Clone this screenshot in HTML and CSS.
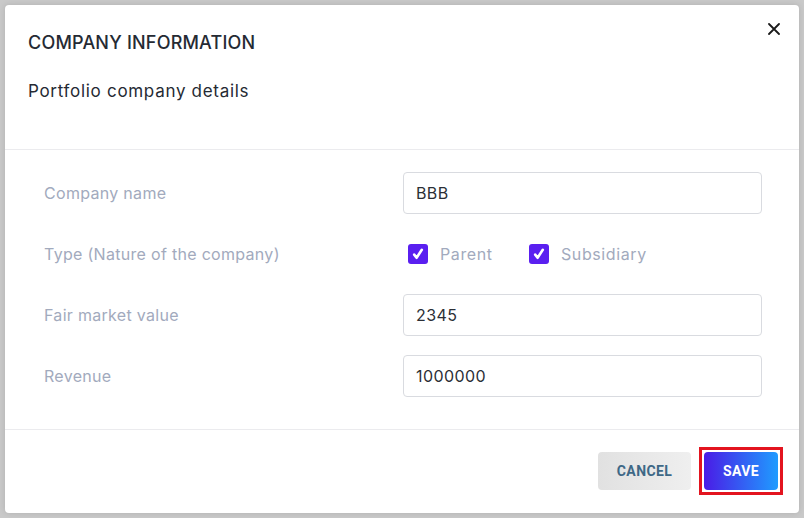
FILE: index.html
```html
<!DOCTYPE html>
<html lang="en">
<head>
<meta charset="utf-8">
<title>Company information</title>
<link rel="stylesheet" href="styles.css">
</head>
<body>
<div class="modal">
  <div class="modal-header">
    <h1 class="title">COMPANY INFORMATION</h1>
    <p class="subtitle">Portfolio company details</p>
    <button class="close" aria-label="Close">
      <svg width="12" height="12" viewBox="0 0 12 12"><path d="M1 1L11 11M11 1L1 11" stroke="#1a1a1a" stroke-width="1.8" stroke-linecap="round"/></svg>
    </button>
  </div>
  <div class="modal-body">
    <label class="label">Company name</label>
    <div class="input input-first">BBB</div>
    <label class="label">Type (Nature of the company)</label>
    <div class="checks">
      <span class="check"><span class="box"><svg width="14" height="14" viewBox="0 0 14 14"><path d="M3.2 7.6L5.6 10.8L10.8 2.8" fill="none" stroke="#fff" stroke-width="2.6" stroke-linecap="round" stroke-linejoin="round"/></svg></span>Parent</span>
      <span class="check"><span class="box"><svg width="14" height="14" viewBox="0 0 14 14"><path d="M3.2 7.6L5.6 10.8L10.8 2.8" fill="none" stroke="#fff" stroke-width="2.6" stroke-linecap="round" stroke-linejoin="round"/></svg></span>Subsidiary</span>
    </div>
    <label class="label">Fair market value</label>
    <div class="input">2345</div>
    <label class="label">Revenue</label>
    <div class="input">1000000</div>
  </div>
  <div class="modal-footer">
    <button class="btn btn-cancel">CANCEL</button>
    <button class="btn btn-save">SAVE</button>
  </div>
</div>
</body>
</html>
```
FILE: styles.css
```css
* { box-sizing: border-box; }
html, body { margin: 0; height: 100%; }
body {
  background: #c9c9c9;
  padding: 5px;
  font-family: Inter, "Open Sans", sans-serif;
}
.modal {
  width: 794px;
  height: 508px;
  background: #fff;
  border-radius: 4px;
  box-shadow: 0 0 6px rgba(0,0,0,0.12);
  display: flex;
  flex-direction: column;
}
.modal-header {
  position: relative;
  height: 145px;
  padding: 27px 23px 0 23px;
  border-bottom: 1px solid #ebebee;
}
.title {
  margin: 0;
  font-size: 18px;
  font-weight: 500;
  color: #252a33;
  letter-spacing: 0.2px;
  line-height: 22px;
}
.subtitle {
  margin: 26px 0 0;
  font-size: 17px;
  font-weight: 400;
  color: #252a33;
  letter-spacing: 0.7px;
  line-height: 22px;
}
.close {
  position: absolute;
  top: 18px;
  right: 19px;
  width: 12px;
  height: 12px;
  padding: 0;
  border: 0;
  background: none;
  display: flex;
}
.modal-body {
  display: grid;
  grid-template-columns: 359px 359px;
  grid-auto-rows: 42px;
  row-gap: 19px;
  padding: 22px 37px 32px 39px;
  border-bottom: 1px solid #ebebee;
  align-items: center;
}
.label {
  font-size: 16px;
  color: #a2aabd;
  letter-spacing: 0.3px;
}
.input {
  height: 42px;
  border: 1px solid #d9dbe0;
  border-radius: 4px;
  padding: 0 12px;
  display: flex;
  align-items: center;
  font-size: 16px;
  letter-spacing: 0.4px;
  color: #2b2f36;
}
.checks {
  display: flex;
  padding-left: 5px;
}
.check {
  display: flex;
  align-items: center;
  font-size: 16px;
  letter-spacing: 0.6px;
  color: #a2aabd;
  width: 121px;
}
.box {
  width: 20px;
  height: 20px;
  border-radius: 3px;
  background: #5a1ff0;
  display: flex;
  align-items: center;
  justify-content: center;
  margin-right: 12px;
}
.modal-footer {
  flex: 1;
  display: flex;
  justify-content: flex-end;
  align-items: flex-start;
  gap: 13px;
  padding: 22px 21px 0 0;
}
.btn {
  height: 38px;
  border: 0;
  border-radius: 4px;
  font-family: Roboto, Inter, sans-serif;
  font-weight: 700;
  font-size: 14px;
  letter-spacing: 0.4px;
  cursor: pointer;
}
.btn-cancel {
  width: 93px;
  background: linear-gradient(90deg, #e1e1e1, #efefef);
  color: #3e6886;
}
.btn-save {
  position: relative;
  width: 74px;
  background: linear-gradient(90deg, #4a1ce6, #1f9cff);
  color: #fff;
}
.btn-save::after {
  content: "";
  position: absolute;
  inset: -5px -5px -5px -5px;
  border: 3px solid #e3141f;
}
```
